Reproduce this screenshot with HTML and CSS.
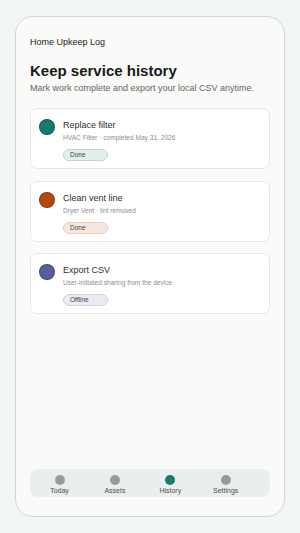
FILE: index.html
```html
<!DOCTYPE html>
<html lang="en">
<head>
    <meta charset="UTF-8">
    <meta name="viewport" content="width=device-width, initial-scale=1.0">
    <title>Home Upkeep Log</title>
    <link rel="stylesheet" href="styles.css">
</head>
<body>
    <!-- phone frame -->
    <div class="phone">
        <div class="app-name">Home Upkeep Log</div>
        <h1 class="page-title">Keep service history</h1>
        <p class="page-sub">Mark work complete and export your local CSV anytime.</p>

        <div class="card-list">
            <div class="card">
                <span class="dot dot-teal"></span>
                <div class="card-body">
                    <div class="card-title">Replace filter</div>
                    <div class="card-meta">HVAC Filter · completed May 31, 2026</div>
                    <span class="badge badge-teal">Done</span>
                </div>
            </div>
            <div class="card">
                <span class="dot dot-rust"></span>
                <div class="card-body">
                    <div class="card-title">Clean vent line</div>
                    <div class="card-meta">Dryer Vent · lint removed</div>
                    <span class="badge badge-rust">Done</span>
                </div>
            </div>
            <div class="card">
                <span class="dot dot-indigo"></span>
                <div class="card-body">
                    <div class="card-title">Export CSV</div>
                    <div class="card-meta">User-initiated sharing from the device</div>
                    <span class="badge badge-indigo">Offline</span>
                </div>
            </div>
        </div>

        <!-- bottom tabs -->
        <div class="tabbar">
            <div class="tab"><span class="tab-dot"></span>Today</div>
            <div class="tab"><span class="tab-dot"></span>Assets</div>
            <div class="tab tab-active"><span class="tab-dot"></span>History</div>
            <div class="tab"><span class="tab-dot"></span>Settings</div>
        </div>
    </div>
</body>
</html>
```

FILE: styles.css
```css
body{
    margin: 0;
    background-color: #f1f5f4;
    font-family: "Liberation Sans", Arial, sans-serif;
}

.phone{
    width: 270px;
    height: 501px;
    margin: 16px 0 0 15px;
    box-sizing: border-box;
    border: 1px solid #cdd8d4;
    border-radius: 18px;
    background-color: #fafaf8;
    padding: 19px 14px 19px 14px;
    display: flex;
    flex-direction: column;
}

.app-name{
    font-size: 9px;
    color: #1e2422;
    line-height: 12px;
}

.page-title{
    margin: 13px 0 0 0;
    font-size: 15px;
    font-weight: bold;
    color: #161a19;
    line-height: 20px;
}

.page-sub{
    margin: 1px 0 0 0;
    font-size: 9px;
    color: #5f6866;
    line-height: 12px;
}

.card-list{
    margin-top: 14px;
    display: flex;
    flex-direction: column;
    gap: 11.5px;
}

.card{
    height: 61px;
    box-sizing: border-box;
    border: 1px solid #e3e8e6;
    border-radius: 7px;
    background-color: #ffffff;
    padding: 10px 8px;
    display: flex;
    gap: 8px;
}

.dot{
    width: 16px;
    height: 16px;
    border-radius: 50%;
    flex-shrink: 0;
    box-sizing: border-box;
    border: 1px solid rgba(0,0,0,0.25);
}

.dot-teal{ background-color: #177a6f; }
.dot-rust{ background-color: #b5460e; }
.dot-indigo{ background-color: #5b5d9b; }

.card-body{
    display: flex;
    flex-direction: column;
    align-items: flex-start;
}

.card-title{
    font-size: 9px;
    color: #2b302f;
    line-height: 13px;
}

.card-meta{
    margin-top: 1px;
    font-size: 6.6px;
    color: #8a918f;
    line-height: 9px;
}

.badge{
    margin-top: 7px;
    width: 45px;
    height: 12px;
    box-sizing: border-box;
    border-radius: 6px;
    border: 1px solid;
    font-size: 6.5px;
    line-height: 10px;
    padding-left: 6px;
    color: #3a403e;
}

.badge-teal{ background-color: #e2efed; border-color: #bcd7d2; }
.badge-rust{ background-color: #f8e7e0; border-color: #eccbbd; }
.badge-indigo{ background-color: #ebebf2; border-color: #cfd0dd; }

.tabbar{
    margin-top: auto;
    height: 28px;
    border-radius: 8px;
    background-color: #e9efed;
    display: flex;
    padding-left: 9.5px;
    gap: 15.4px;
}

.tab{
    width: 40px;
    display: flex;
    flex-direction: column;
    align-items: center;
    padding-top: 6px;
    font-size: 7px;
    line-height: 9px;
    color: #4a504e;
}

.tab-dot{
    width: 10px;
    height: 10px;
    border-radius: 50%;
    background-color: #959c9a;
    margin-bottom: 1px;
}

.tab-active .tab-dot{
    background-color: #177a6f;
}
```
